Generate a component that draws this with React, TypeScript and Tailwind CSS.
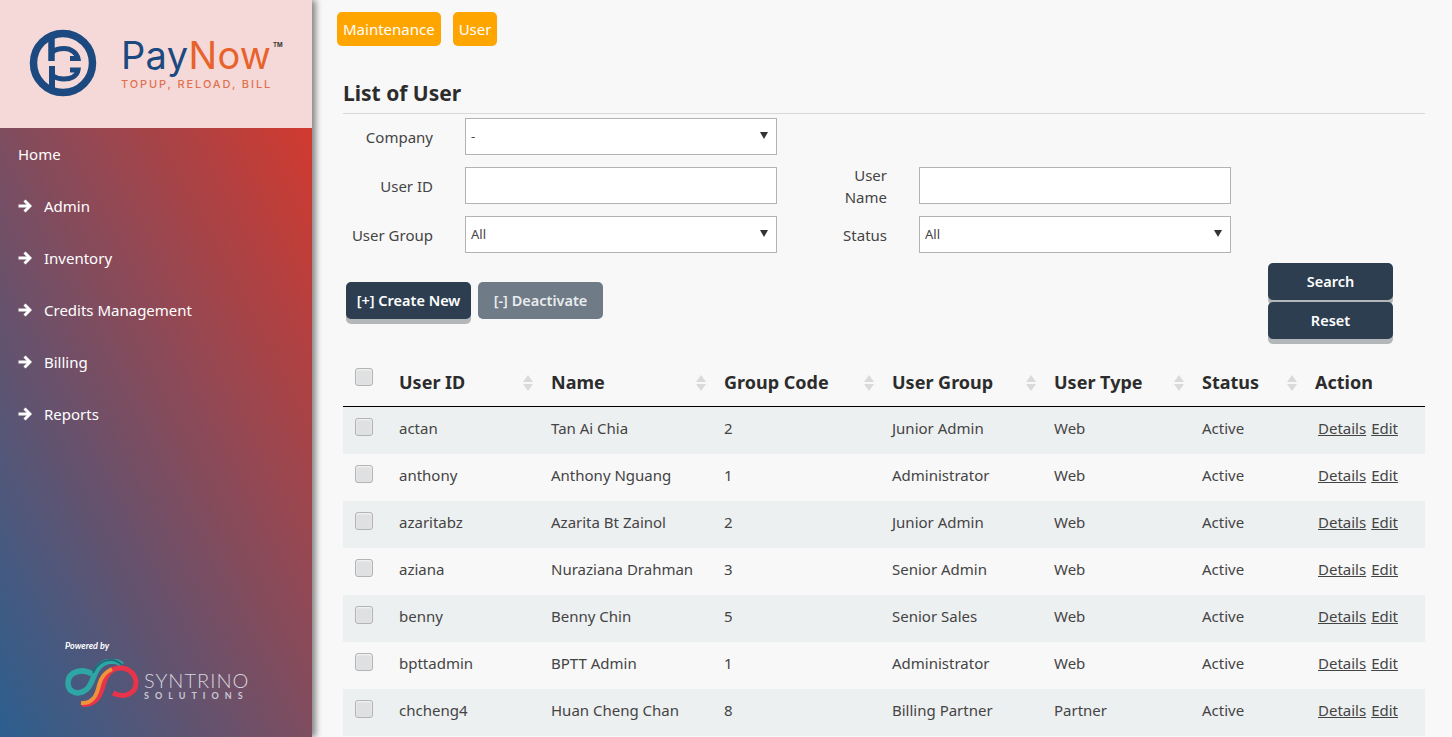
import React from 'react';

const menu = ['Admin', 'Inventory', 'Credits Management', 'Billing', 'Reports'];

const users = [
  { id: 'actan', name: 'Tan Ai Chia', code: '2', group: 'Junior Admin', type: 'Web' },
  { id: 'anthony', name: 'Anthony Nguang', code: '1', group: 'Administrator', type: 'Web' },
  { id: 'azaritabz', name: 'Azarita Bt Zainol', code: '2', group: 'Junior Admin', type: 'Web' },
  { id: 'aziana', name: 'Nuraziana Drahman', code: '3', group: 'Senior Admin', type: 'Web' },
  { id: 'benny', name: 'Benny Chin', code: '5', group: 'Senior Sales', type: 'Web' },
  { id: 'bpttadmin', name: 'BPTT Admin', code: '1', group: 'Administrator', type: 'Web' },
  { id: 'chcheng4', name: 'Huan Cheng Chan', code: '8', group: 'Billing Partner', type: 'Partner' },
];

function PayNowLogo() {
  return (
    <div className="flex items-start pl-[29px] -mt-[2px]">
      <svg width="68" height="68" viewBox="0 0 68 68" fill="none" stroke="#1c4a80">
        <circle cx="34" cy="34" r="29.5" strokeWidth="7.5" />
        <path d="M22.5 6V32" strokeWidth="6.5" />
        <path d="M23 23C27 20 31 19.5 35 19.5C42 19.5 48 24 49 29.5H41" strokeWidth="5" />
        <path d="M23 62V37" strokeWidth="6" />
        <path d="M41 41H49C48 47 42 50 35 50C31 50 27 49 24 47" strokeWidth="5" />
      </svg>
      <div className="ml-[24px] relative mt-[7px] font-['Inter',sans-serif]">
        <div className="text-[38px] leading-[38px] tracking-[0.3px] whitespace-nowrap">
          <span className="text-[#1c4a80]">Pay</span>
          <span className="text-[#e8622c]">Now</span>
        </div>
        <div className="text-[11px] leading-[12px] tracking-[1.9px] font-medium text-[#e0714f] mt-[4px] whitespace-nowrap">
          TOPUP, RELOAD, BILL
        </div>
        <span className="absolute left-[152px] top-[5px] text-[6px] leading-[7px] font-bold text-[#333]">TM</span>
      </div>
    </div>
  );
}

function SyntrinoLogo() {
  return (
    <div className="flex flex-col items-start pl-[65px]">
      <div className="font-['Lato',sans-serif] italic font-bold text-[9px] leading-[10px] text-white">Powered by</div>
      <div className="flex items-center mt-[8px]">
        <svg width="74" height="50" viewBox="0 0 74 50" fill="none">
          <path d="M27 15C18 9 3 12 3 24C3 34 14 37 22 30C30 23 28 4 46 2C50 2 54 3 57 6" stroke="#2fa6a6" strokeWidth="5.5" />
          <path d="M28 14C31 6 38 1 46 1C50 1 54 3 57 6" stroke="#1d6f7c" strokeWidth="2" />
          <path d="M17 45C30 47 35 38 38 27C41 15 47 9 55 9C65 9 71 16 71 24C71 34 60 40 48 34" stroke="#e8344a" strokeWidth="5" />
          <path d="M16 44C28 45 32 36 34 26C36 18 40 13 47 10" stroke="#f0923a" strokeWidth="4" />
        </svg>
        <div className="ml-[5px] mt-[2px]">
          <div className="font-['Lato',sans-serif] font-light text-[20px] leading-[20px] text-[#d5d5dc] tracking-[1px]">SYNTRINO</div>
          <div className="font-['Lato',sans-serif] font-bold text-[9px] leading-[9px] mt-[1px] text-[#c9c9d2] tracking-[6px]">SOLUTIONS</div>
        </div>
      </div>
    </div>
  );
}

function Arrow() {
  return (
    <svg width="14" height="14" viewBox="0 0 14 14" fill="none" stroke="white" strokeWidth="3" className="mr-[12px]">
      <path d="M0.5 7H11" />
      <path d="M6.5 1.5L12 7L6.5 12.5" />
    </svg>
  );
}

function Sidebar() {
  return (
    <aside className="w-[312px] h-full shrink-0 flex flex-col shadow-[4px_0_6px_rgba(0,0,0,0.45)] relative z-10">
      <div className="h-[128px] shrink-0 bg-[#f5d9d8] flex items-center">
        <PayNowLogo />
      </div>
      <nav className="flex-1 flex flex-col justify-between bg-[linear-gradient(to_top_right,#2c5f8f,#d13a2f)] text-white text-[15px] pb-[28px]">
        <ul>
          <li className="h-[52px] pl-[18px] flex items-center">Home</li>
          {menu.map((item) => (
            <li key={item} className="h-[52px] pl-[18px] flex items-center">
              <Arrow />
              {item}
            </li>
          ))}
        </ul>
        <SyntrinoLogo />
      </nav>
    </aside>
  );
}

function Label({ children }: { children: React.ReactNode }) {
  return <label className="text-right text-[#444] leading-[22px]">{children}</label>;
}

function SelectBox({ value }: { value: string }) {
  return (
    <div className="relative">
      <select
        defaultValue={value}
        className="appearance-none block w-full h-[37px] bg-white border border-[#b3b3b3] px-[5px] text-[13px] text-[#444] outline-none"
      >
        <option>{value}</option>
      </select>
      <span className="absolute right-[9px] top-[14px] w-0 h-0 border-x-[4px] border-x-transparent border-t-[7px] border-t-[#333]" />
    </div>
  );
}

function TextBox() {
  return <input className="block w-full h-[37px] bg-white border border-[#b3b3b3]" />;
}

function Checkbox() {
  return <input type="checkbox" className="appearance-none block w-[18px] h-[18px] rounded-[3px] border border-[#b4b4b4] bg-[#dfe0e1] shadow-[inset_0_1px_2px_rgba(255,255,255,0.7)]" />;
}

function SortIcon() {
  return (
    <span className="flex flex-col gap-[2px]">
      <span className="w-0 h-0 border-x-[5px] border-x-transparent border-b-[7px] border-b-[#d8dadb]" />
      <span className="w-0 h-0 border-x-[5px] border-x-transparent border-t-[7px] border-t-[#d8dadb]" />
    </span>
  );
}

function Button({ children, tone = 'dark', className = '' }: { children: React.ReactNode; tone?: 'dark' | 'muted'; className?: string }) {
  const look = tone === 'dark' ? 'bg-[#2c3e50] shadow-[0_5px_0_#b4b7ba]' : 'bg-[#6f7b87]';
  const text = tone === 'dark' ? 'text-white' : 'text-[#e9ecee]';
  return (
    <button className={`block w-[125px] h-[37px] rounded-[5px] text-[14.5px] font-semibold ${look} ${text} ${className}`}>
      {children}
    </button>
  );
}

const heads = [
  { label: 'User ID', width: 'w-[152px]' },
  { label: 'Name', width: 'w-[173px]' },
  { label: 'Group Code', width: 'w-[168px]' },
  { label: 'User Group', width: 'w-[162px]' },
  { label: 'User Type', width: 'w-[148px]' },
  { label: 'Status', width: 'w-[113px]' },
];

function UserTable() {
  return (
    <table className="w-[1082px] table-fixed border-separate border-spacing-0 text-[15px] text-[#444]">
      <thead>
        <tr className="h-[47px]">
          <th className="w-[44px] pl-[12px] align-top pt-[8px] border-b border-black"><Checkbox /></th>
          {heads.map((h) => (
            <th key={h.label} className={`${h.width} pl-[12px] pr-[6px] pb-[1px] text-left border-b border-black`}>
              <div className="flex items-center justify-between text-[18px] font-bold text-[#2c2c2c]">
                {h.label}
                <SortIcon />
              </div>
            </th>
          ))}
          <th className="w-[122px] pl-[12px] pb-[1px] text-left text-[18px] font-bold text-[#2c2c2c] border-b border-black">Action</th>
        </tr>
      </thead>
      <tbody>
        {users.map((u, i) => (
          <tr key={u.id} className={`h-[47px] ${i % 2 === 0 ? 'bg-[#edf0f1]' : ''}`}>
            <td className="pl-[12px] pb-[7px]"><Checkbox /></td>
            <td className="pl-[12px] pb-[4px]">{u.id}</td>
            <td className="pl-[12px] pb-[4px]">{u.name}</td>
            <td className="pl-[12px] pb-[4px]">{u.code}</td>
            <td className="pl-[12px] pb-[4px]">{u.group}</td>
            <td className="pl-[12px] pb-[4px]">{u.type}</td>
            <td className="pl-[12px] pb-[4px]">Active</td>
            <td className="pl-[15px] pb-[4px]">
              <a className="underline">Details</a>
              <a className="underline ml-[5px]">Edit</a>
            </td>
          </tr>
        ))}
      </tbody>
    </table>
  );
}

export default function App() {
  return (
    <div className="h-screen flex overflow-hidden bg-[#f8f8f8] font-['Noto_Sans','Open_Sans',sans-serif] text-[15px]">
      <Sidebar />
      <main className="flex-1 pl-[25px] pr-[27px] pt-[12px]">
        <div className="flex gap-[12px]">
          <span className="h-[34px] px-[6px] rounded-[5px] bg-[#ffa500] text-white text-[15px] flex items-center">Maintenance</span>
          <span className="h-[34px] px-[6px] rounded-[5px] bg-[#ffa500] text-white text-[15px] flex items-center">User</span>
        </div>

        <h1 className="ml-[6px] mt-[32px] text-[21px] leading-[30px] font-bold text-[#2c2c2c]">List of User</h1>
        <div className="ml-[6px] mt-[5px] border-t border-[#d8d8d8]" />

        {/* filter form: label / field pairs in two columns */}
        <div className="ml-[6px] mt-[4px] grid grid-cols-[90px_344px_110px_344px] grid-rows-[37px_37px_37px] gap-y-[12px] items-center">
          <Label>Company</Label>
          <div className="ml-[32px]"><SelectBox value="-" /></div>
          <div />
          <div />

          <Label>User ID</Label>
          <div className="ml-[32px]"><TextBox /></div>
          <Label>User<br />Name</Label>
          <div className="ml-[32px]"><TextBox /></div>

          <Label>User Group</Label>
          <div className="ml-[32px]"><SelectBox value="All" /></div>
          <Label>Status</Label>
          <div className="ml-[32px]"><SelectBox value="All" /></div>
        </div>

        <div className="ml-[9px] mt-[10px] flex justify-between w-[1047px] h-[81px]">
          <div className="flex gap-[7px] pt-[19px]">
            <Button>[+] Create New</Button>
            <Button tone="muted">[-] Deactivate</Button>
          </div>
          <div>
            <Button>Search</Button>
            <Button className="mt-[2px]">Reset</Button>
          </div>
        </div>

        <div className="ml-[6px] mt-[16px]">
          <UserTable />
        </div>
      </main>
    </div>
  );
}
